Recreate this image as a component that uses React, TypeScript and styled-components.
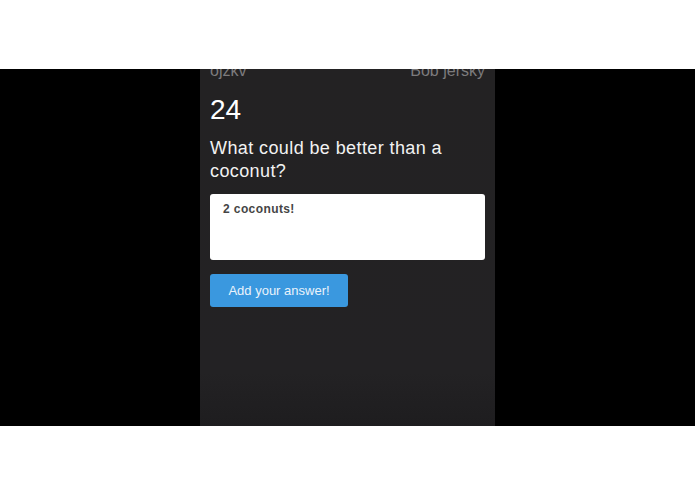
import React from "react";
import styled, { createGlobalStyle } from "styled-components";

const Global = createGlobalStyle`
  html, body { margin: 0; padding: 0; background: #ffffff; }
  body { font-family: "Liberation Sans", Arial, sans-serif; }
`;

const Page = styled.div`
  display: flex;
  flex-direction: column;
  height: 494px;
`;

const WhiteBand = styled.div<{ $h: number }>`
  height: ${(p) => p.$h}px;
  background: #ffffff;
  flex: none;
`;

const Stage = styled.div`
  height: 357px;
  background: #000000;
  display: flex;
  justify-content: center;
  flex: none;
`;

const Phone = styled.div`
  width: 295px;
  background: linear-gradient(#232223 0%, #232224 85%, #1e1d1f 100%);
  overflow: hidden;
  padding: 0 10px;
  box-sizing: border-box;
  display: flex;
  flex-direction: column;
`;

const Header = styled.div`
  display: flex;
  justify-content: space-between;
  margin-top: -8px;
  font-size: 16px;
  line-height: 20px;
  color: #7c7b7d;
`;

const Count = styled.div`
  margin-top: 13px;
  font-size: 28px;
  line-height: 32px;
  color: #ffffff;
`;

const Question = styled.div`
  margin-top: 11px;
  font-size: 18px;
  line-height: 23px;
  letter-spacing: 0.4px;
  color: #f2f2f2;
`;

const AnswerBox = styled.div`
  margin-top: 11px;
  height: 66px;
  background: #ffffff;
  border-radius: 3px;
  box-sizing: border-box;
  padding: 7px 13px;
  font-size: 12px;
  font-weight: bold;
  line-height: 16px;
  letter-spacing: 0.4px;
  color: #454545;
`;

const Button = styled.button`
  margin-top: 14px;
  align-self: flex-start;
  width: 138px;
  height: 33px;
  border: none;
  border-radius: 3px;
  background: #3a98df;
  color: #eaf3fb;
  font-family: "Liberation Sans", Arial, sans-serif;
  font-size: 13px;
  padding: 0;
`;

export default function App() {
  return (
    <>
      <Global />
      <Page>
        <WhiteBand $h={69} />
        <Stage>
          <Phone>
            <Header>
              <span>ojzkv</span>
              <span>Bob jersky</span>
            </Header>
            <Count>24</Count>
            <Question>What could be better than a coconut?</Question>
            <AnswerBox>2 coconuts!</AnswerBox>
            <Button>Add your answer!</Button>
          </Phone>
        </Stage>
        <WhiteBand $h={68} />
      </Page>
    </>
  );
}
